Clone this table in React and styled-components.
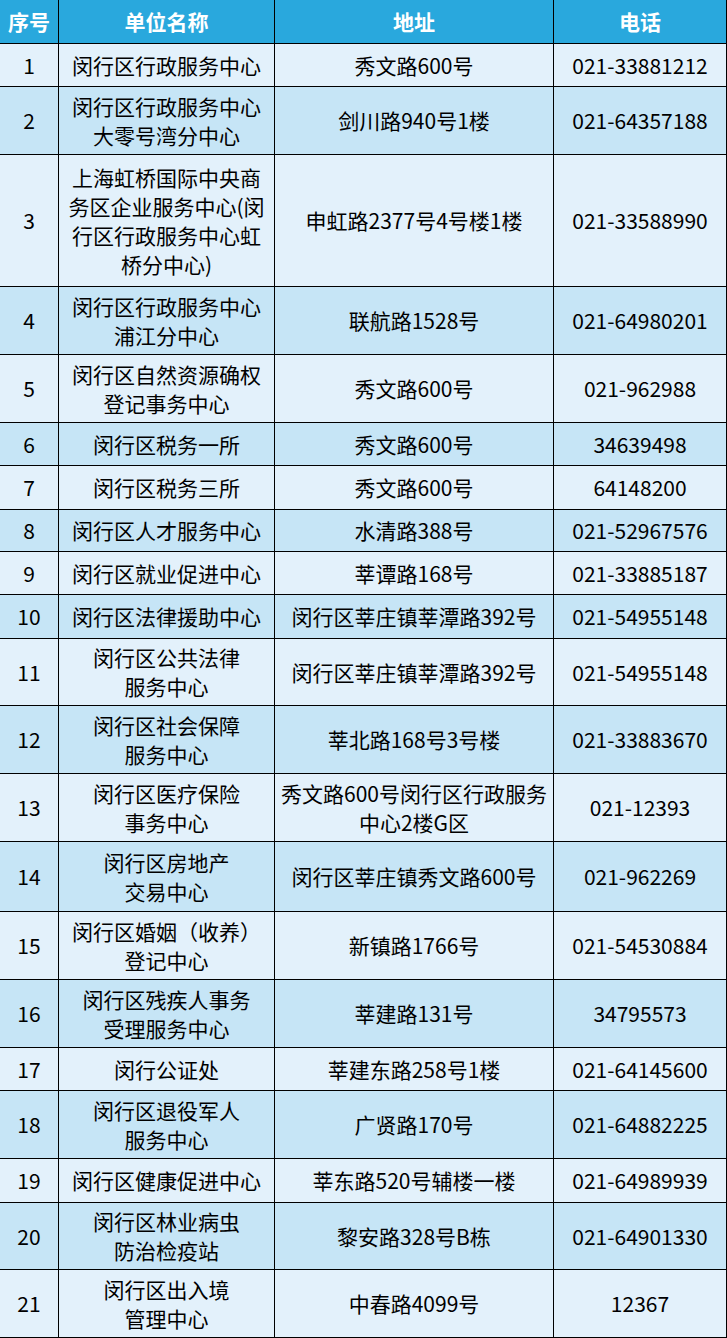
import React from "react";
import styled, { createGlobalStyle } from "styled-components";

const Global = createGlobalStyle`
  html, body { margin: 0; padding: 0; background: #ffffff; }
  body {
    font-family: "Noto Sans CJK SC", "Noto Sans", sans-serif;
  }
  * { box-sizing: border-box; }
`;

const Table = styled.div`
  width: 727px;
  display: flex;
  flex-direction: column;
`;

const Row = styled.div`
  display: grid;
  grid-template-columns: 59px 216px 279px 173px;
  height: ${(p) => p.$h}px;
  background: ${(p) =>
    p.$head ? "#29a8dd" : p.$alt ? "#c6e5f6" : "#e3f1fb"};
`;

const Cell = styled.div`
  display: flex;
  align-items: center;
  justify-content: center;
  text-align: center;
  white-space: pre-line;
  border-right: 1px solid #000;
  border-bottom: 1px solid #000;
  font-size: 21px;
  line-height: 29px;
  color: ${(p) => (p.$head ? "#ffffff" : "#000000")};
  font-weight: ${(p) => (p.$head ? 700 : 400)};
  padding: 0 2px;
`;

const rows = [
  [43, "闵行区行政服务中心", "秀文路600号", "021-33881212"],
  [68, "闵行区行政服务中心\n大零号湾分中心", "剑川路940号1楼", "021-64357188"],
  [132, "上海虹桥国际中央商\n务区企业服务中心(闵\n行区行政服务中心虹\n桥分中心)", "申虹路2377号4号楼1楼", "021-33588990"],
  [68, "闵行区行政服务中心\n浦江分中心", "联航路1528号", "021-64980201"],
  [68, "闵行区自然资源确权\n登记事务中心", "秀文路600号", "021-962988"],
  [43, "闵行区税务一所", "秀文路600号", "34639498"],
  [44, "闵行区税务三所", "秀文路600号", "64148200"],
  [42, "闵行区人才服务中心", "水清路388号", "021-52967576"],
  [43, "闵行区就业促进中心", "莘谭路168号", "021-33885187"],
  [44, "闵行区法律援助中心", "闵行区莘庄镇莘潭路392号", "021-54955148"],
  [67, "闵行区公共法律\n服务中心", "闵行区莘庄镇莘潭路392号", "021-54955148"],
  [68, "闵行区社会保障\n服务中心", "莘北路168号3号楼", "021-33883670"],
  [68, "闵行区医疗保险\n事务中心", "秀文路600号闵行区行政服务\n中心2楼G区", "021-12393"],
  [70, "闵行区房地产\n交易中心", "闵行区莘庄镇秀文路600号", "021-962269"],
  [68, "闵行区婚姻（收养）\n登记中心", "新镇路1766号", "021-54530884"],
  [68, "闵行区残疾人事务\n受理服务中心", "莘建路131号", "34795573"],
  [43, "闵行公证处", "莘建东路258号1楼", "021-64145600"],
  [68, "闵行区退役军人\n服务中心", "广贤路170号", "021-64882225"],
  [44, "闵行区健康促进中心", "莘东路520号辅楼一楼", "021-64989939"],
  [67, "闵行区林业病虫\n防治检疫站", "黎安路328号B栋", "021-64901330"],
  [68, "闵行区出入境\n管理中心", "中春路4099号", "12367"],
];

export default function App() {
  return (
    <>
      <Global />
      <Table>
        <Row $head $h={44}>
          <Cell $head>序号</Cell>
          <Cell $head>单位名称</Cell>
          <Cell $head>地址</Cell>
          <Cell $head>电话</Cell>
        </Row>
        {rows.map(([h, name, addr, tel], i) => (
          <Row key={i} $h={h} $alt={i % 2 === 1}>
            <Cell>{i + 1}</Cell>
            <Cell>{name}</Cell>
            <Cell>{addr}</Cell>
            <Cell>{tel}</Cell>
          </Row>
        ))}
      </Table>
    </>
  );
}
